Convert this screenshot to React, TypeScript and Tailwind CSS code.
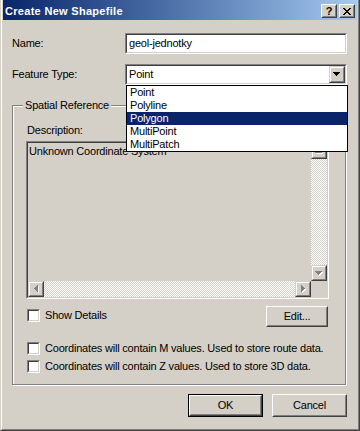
import React from "react";

type Dir = "up" | "down" | "left" | "right";

function triRects(dir: Dir): [number, number, number, number][] {
  switch (dir) {
    case "down":
      return [[0, 0, 7, 1], [1, 1, 5, 1], [2, 2, 3, 1], [3, 3, 1, 1]];
    case "up":
      return [[3, 0, 1, 1], [2, 1, 3, 1], [1, 2, 5, 1], [0, 3, 7, 1]];
    case "left":
      return [[0, 3, 1, 1], [1, 2, 1, 3], [2, 1, 1, 5], [3, 0, 1, 7]];
    default:
      return [[0, 0, 1, 7], [1, 1, 1, 5], [2, 2, 1, 3], [3, 3, 1, 1]];
  }
}

function Arrow({ dir, disabled }: { dir: Dir; disabled?: boolean }) {
  const vert = dir === "down" || dir === "up";
  const w = vert ? 7 : 4;
  const h = vert ? 4 : 7;
  const rects = triRects(dir);
  return (
    <svg width={w + 1} height={h + 1} viewBox={`0 0 ${w + 1} ${h + 1}`} shapeRendering="crispEdges" className="block">
      {disabled &&
        rects.map((r, i) => <rect key={"s" + i} x={r[0] + 1} y={r[1] + 1} width={r[2]} height={r[3]} fill="#ffffff" />)}
      {rects.map((r, i) => (
        <rect key={i} x={r[0]} y={r[1]} width={r[2]} height={r[3]} fill={disabled ? "#808080" : "#000000"} />
      ))}
    </svg>
  );
}

function ScrollBtn({ dir, disabled }: { dir: Dir; disabled?: boolean }) {
  return (
    <div className="w-[16px] h-[16px] shrink-0 bg-[#d4d0c8] border border-t-[#d4d0c8] border-l-[#d4d0c8] border-r-[#404040] border-b-[#404040]">
      <div className="w-full h-full border border-t-white border-l-white border-r-[#808080] border-b-[#808080] flex items-center justify-center">
        <Arrow dir={dir} disabled={disabled} />
      </div>
    </div>
  );
}

function Sunken({ className, innerClass, children }: { className?: string; innerClass?: string; children?: React.ReactNode }) {
  return (
    <div className={"border border-t-[#808080] border-l-[#808080] border-r-white border-b-white " + (className ?? "")}>
      <div className={"w-full h-full border border-t-[#404040] border-l-[#404040] border-r-[#d4d0c8] border-b-[#d4d0c8] " + (innerClass ?? "")}>
        {children}
      </div>
    </div>
  );
}

function Checkbox() {
  return <Sunken className="w-[13px] h-[13px] shrink-0" innerClass="bg-white" />;
}

function Button({ children, className, isDefault }: { children: React.ReactNode; className?: string; isDefault?: boolean }) {
  if (isDefault) {
    return (
      <div className={"border border-black " + (className ?? "")}>
        <div className="w-full h-full border border-t-white border-l-white border-r-[#404040] border-b-[#404040]">
          <div className="w-full h-full flex items-center justify-center border border-transparent border-r-[#808080] border-b-[#808080]">
            {children}
          </div>
        </div>
      </div>
    );
  }
  return (
    <div className={"border border-t-white border-l-white border-r-[#404040] border-b-[#404040] " + (className ?? "")}>
      <div className="w-full h-full flex items-center justify-center border border-transparent border-r-[#808080] border-b-[#808080]">
        {children}
      </div>
    </div>
  );
}

function CaptionBtn({ children }: { children: React.ReactNode }) {
  return (
    <div className="w-[16px] h-[14px] bg-[#d4d0c8] border border-t-white border-l-white border-r-[#404040] border-b-[#404040]">
      <div className="w-full h-full flex items-center justify-center border border-transparent border-r-[#808080] border-b-[#808080]">
        {children}
      </div>
    </div>
  );
}

const checker =
  "bg-[image:repeating-conic-gradient(#ffffff_0_25%,#d4d0c8_0_50%)] [background-size:2px_2px]";

export default function App() {
  const items = ["Point", "Polyline", "Polygon", "MultiPoint", "MultiPatch"];
  return (
    <div className="w-[360px] h-[431px] relative bg-[#d4d0c8] border-l border-r border-b border-l-[#d4d0c8] border-r-[#404040] border-b-[#404040] text-[11px] leading-[13px] tracking-[-0.2px] text-black font-['Liberation_Sans',Arial,sans-serif] select-none overflow-hidden">
      <div className="h-full flex flex-col border-l border-r border-b border-l-white border-r-[#808080] border-b-[#808080] px-[1px]">
        {/* Title bar */}
        <div className="h-[20px] shrink-0 flex items-center pt-[2px] pl-[2px] pr-[2px] bg-linear-to-r from-[#0a246a] to-[#a6caf0]">
          <span className="text-white font-bold tracking-[0.3px]">Create New Shapefile</span>
          <div className="ml-auto flex gap-[2px]">
            <CaptionBtn>
              <span className="font-bold text-[11px] leading-[10px] tracking-normal">?</span>
            </CaptionBtn>
            <CaptionBtn>
              <svg width="8" height="7" viewBox="0 0 8 7" shapeRendering="crispEdges" className="block">
                <path d="M0 0h2v1h-2zM6 0h2v1h-2zM1 1h2v1h-2zM5 1h2v1h-2zM2 2h4v1h-4zM3 3h2v1h-2zM2 4h4v1h-4zM1 5h2v1h-2zM5 5h2v1h-2zM0 6h2v1h-2zM6 6h2v1h-2z" fill="#000" />
              </svg>
            </CaptionBtn>
          </div>
        </div>

        {/* Name row */}
        <div className="ml-[9px] mt-[13px] flex items-center">
          <span className="w-[113px]">Name:</span>
          <Sunken className="w-[222px] h-[21px]" innerClass="bg-white flex items-center pl-[2px]">
            <span>geol-jednotky</span>
          </Sunken>
        </div>

        {/* Feature Type row */}
        <div className="ml-[9px] mt-[10px] flex items-center">
          <span className="w-[113px]">Feature Type:</span>
          <Sunken className="w-[222px] h-[21px]" innerClass="bg-white flex items-center pl-[2px]">
            <span className="flex-1">Point</span>
            <div className="w-[16px] h-[17px] bg-[#d4d0c8] border border-t-[#d4d0c8] border-l-[#d4d0c8] border-r-[#404040] border-b-[#404040]">
              <div className="w-full h-full border border-t-white border-l-white border-r-[#808080] border-b-[#808080] flex items-center justify-center">
                <Arrow dir="down" />
              </div>
            </div>
          </Sunken>
        </div>

        {/* Group box */}
        <div className="relative ml-[9px] mt-[20px] w-[334px] h-[280px] shrink-0 border border-[#808080] shadow-[inset_1px_1px_0_#ffffff,1px_1px_0_#ffffff] pl-[13px] pt-[18px]">
          <span className="absolute left-[10px] -top-[7px] px-[2px] bg-[#d4d0c8]">Spatial Reference</span>
          <div className="ml-[1px]">Description:</div>

          <Sunken className="mt-[4px] w-[303px] h-[158px]" innerClass="bg-[#d4d0c8] flex flex-col">
            <div className="flex flex-1 min-h-0">
              <div className="flex-1 pl-[1px] pt-[2px]">Unknown Coordinate System</div>
              <div className="w-[16px] flex flex-col">
                <ScrollBtn dir="up" disabled />
                <div className={"flex-1 " + checker} />
                <ScrollBtn dir="down" disabled />
              </div>
            </div>
            <div className="h-[16px] flex shrink-0">
              <ScrollBtn dir="left" disabled />
              <div className={"flex-1 " + checker} />
              <ScrollBtn dir="right" disabled />
              <div className="w-[16px] bg-[#d4d0c8]" />
            </div>
          </Sunken>

          <div className="mt-[7px] w-[302px] h-[21px] flex items-start">
            <div className="ml-[1px] mt-[3px] flex items-center gap-[5px]">
              <Checkbox />
              <span>Show Details</span>
            </div>
            <Button className="ml-auto w-[62px] h-[21px]">Edit...</Button>
          </div>

          <div className="mt-[15px] ml-[1px] flex items-center gap-[5px]">
            <Checkbox />
            <span>Coordinates will contain M values. Used to store route data.</span>
          </div>
          <div className="mt-[5px] ml-[1px] flex items-center gap-[5px]">
            <Checkbox />
            <span>Coordinates will contain Z values. Used to store 3D data.</span>
          </div>
        </div>

        {/* Buttons */}
        <div className="mt-[9px] flex justify-end gap-[9px] pr-[10px]">
          <Button isDefault className="w-[75px] h-[23px]">OK</Button>
          <Button className="w-[75px] h-[23px]">Cancel</Button>
        </div>
      </div>

      {/* Dropdown list overlay */}
      <div className="absolute left-[125px] top-[85px] w-[222px] h-[67px] bg-white border border-black">
        {items.map((it) => (
          <div
            key={it}
            className={
              "h-[13px] pl-[3px] leading-[13px] " + (it === "Polygon" ? "bg-[#0a246a] text-white" : "text-black")
            }
          >
            {it}
          </div>
        ))}
      </div>
    </div>
  );
}
